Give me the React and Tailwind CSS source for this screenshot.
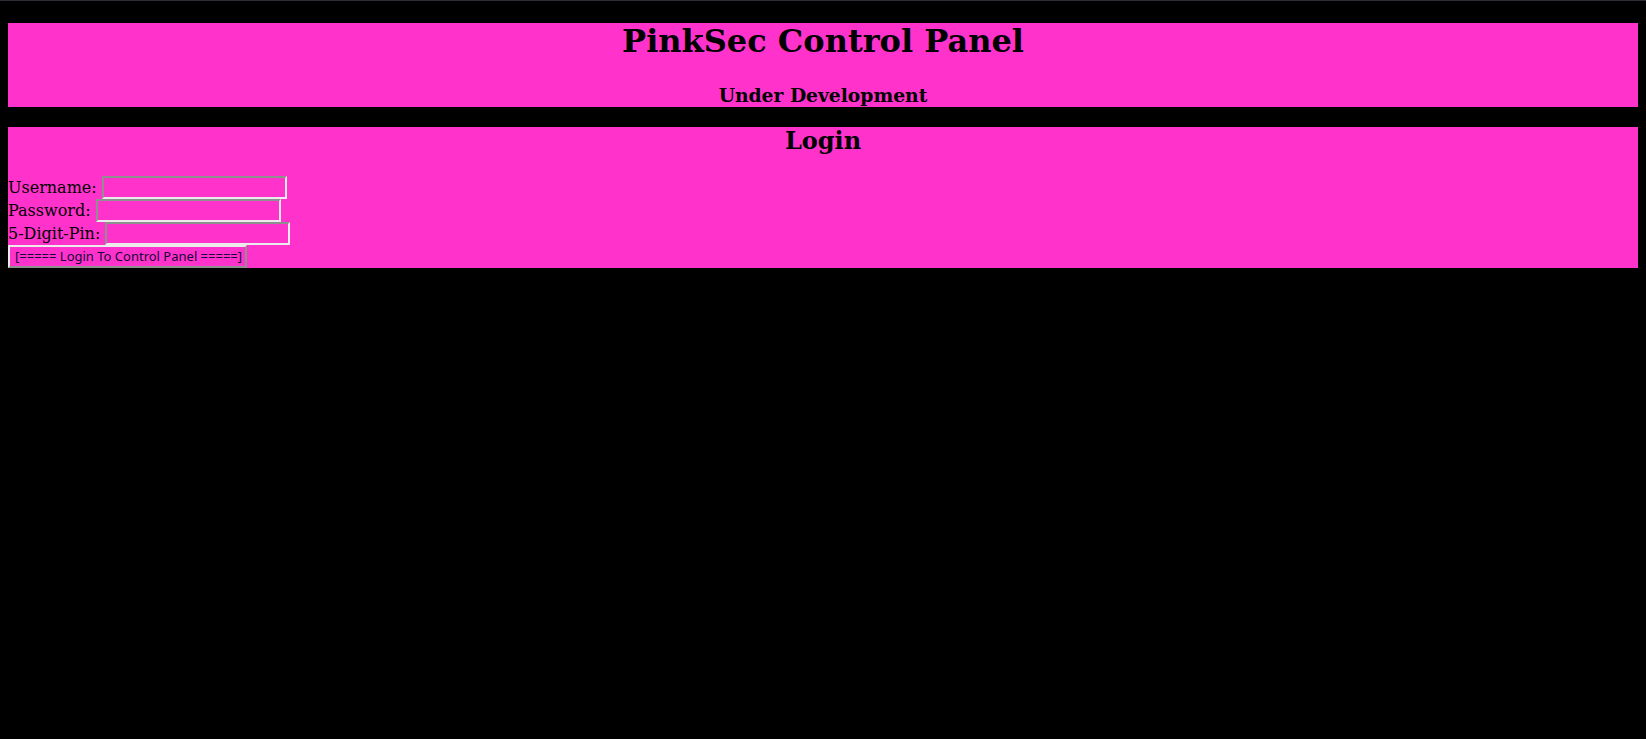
const serif = "font-['DejaVu_Serif','Liberation_Serif',serif]";

const Field = ({ label, type = "text" }) => (
  <div className="flex items-center gap-[5px] h-[23px]">
    <label className="text-[16px] leading-[19px] text-black">{label}</label>
    <input
      type={type}
      className="w-[185px] h-[23px] bg-transparent border-2 border-t-[#8f8f8f] border-l-[#8f8f8f] border-b-[#ebebeb] border-r-[#ebebeb] outline-none px-[2px] text-[13px]"
    />
  </div>
);

export default function App() {
  return (
    <div className={`min-h-screen bg-black ${serif}`}>
      <div className="h-px bg-[#2c2f34]" />

      <div className="px-[8px] pt-[22px]">
        {/* header box */}
        <div className="bg-[#ff33cc] text-black text-center pb-px">
          <h1 className="text-[32px] font-bold leading-[37px]">PinkSec Control Panel</h1>
          <h3 className="text-[18.72px] font-bold leading-[22px] mt-[24px]">Under Development</h3>
        </div>

        {/* login box */}
        <div className="bg-[#ff33cc] text-black mt-[20px]">
          <h2 className="text-[24px] font-bold leading-[28px] text-center">Login</h2>
          <form className="mt-[21px] flex flex-col" onSubmit={(e) => e.preventDefault()}>
            <Field label="Username:" />
            <Field label="Password:" type="password" />
            <Field label="5-Digit-Pin:" />
            <div className="h-[23px] flex">
              <button
                type="submit"
                className="w-[239px] h-[23px] bg-transparent border-2 border-t-[#ebebeb] border-l-[#ebebeb] border-b-[#8f8f8f] border-r-[#8f8f8f] pl-[5px] text-[13px] leading-[15px] text-[#140838] whitespace-nowrap text-left font-['Noto_Sans','Open_Sans',sans-serif]"
              >
                [===== Login To Control Panel =====]
              </button>
            </div>
          </form>
        </div>
      </div>
    </div>
  );
}
